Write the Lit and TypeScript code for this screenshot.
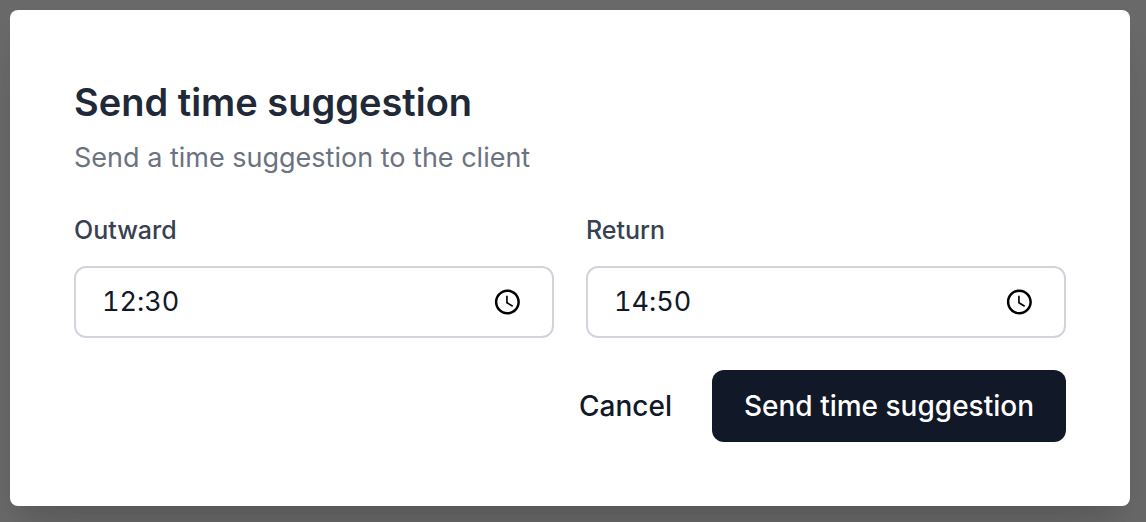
import { LitElement, html, css } from "lit";
import { customElement, property, state } from "lit/decorators.js";

@customElement("time-field")
class TimeField extends LitElement {
  static styles = css`
    :host {
      display: block;
      min-width: 0;
      font-family: Inter, "Liberation Sans", sans-serif;
    }
    .label {
      display: block;
      margin-bottom: 16px;
      font-size: 25px;
      line-height: 40px;
      font-weight: 500;
      color: #374151;
    }
    .box {
      display: flex;
      align-items: center;
      box-sizing: border-box;
      height: 72px;
      padding: 0 30px 0 26px;
      border: 2px solid #d1d5db;
      border-radius: 12px;
      background: #fff;
    }
    .input {
      flex: 1;
      min-width: 0;
      padding: 0;
      border: 0;
      outline: 0;
      background: transparent;
      font-family: inherit;
      font-size: 27px;
      line-height: 40px;
      font-variant-numeric: tabular-nums;
      font-variant-ligatures: no-contextual;
      color: #111827;
    }
    .picker {
      display: flex;
      padding: 0;
      border: 0;
      background: none;
      color: #000;
      cursor: pointer;
    }
    .icon {
      display: block;
      width: 30px;
      height: 30px;
    }
  `;

  @property() label = "";
  @property() value = "";

  private focusInput() {
    this.renderRoot.querySelector("input")?.focus();
  }

  private onInput(e: Event) {
    this.value = (e.target as HTMLInputElement).value;
  }

  render() {
    return html`
      <label class="label" for="time">${this.label}</label>
      <div class="box">
        <input
          class="input"
          id="time"
          type="text"
          inputmode="numeric"
          .value=${this.value}
          @input=${this.onInput}
        />
        <button class="picker" type="button" aria-label="Choose time" @click=${this.focusInput}>
          <svg class="icon" viewBox="0 0 24 24" fill="currentColor" aria-hidden="true">
            <path
              d="M12.3 2C6.8 2 2.3 6.48 2.3 12s4.5 10 10 10c5.52 0 10-4.48 10-10S17.82 2 12.3 2zM12.3 20c-4.42 0-8-3.58-8-8s3.58-8 8-8 8 3.58 8 8-3.58 8-8 8zM12.6 7H11.3v5.9l4.9 3 .7-1.1-4.3-2.6z"
            />
          </svg>
        </button>
      </div>
    `;
  }
}

@customElement("app-root")
class AppRoot extends LitElement {
  static styles = css`
    :host {
      display: block;
      box-sizing: border-box;
      min-height: 100vh;
      padding: 10px 16px 16px 10px;
      background: #696969;
      font-family: Inter, "Liberation Sans", sans-serif;
    }
    .dialog {
      padding: 64px;
      border-radius: 8px;
      background: #fff;
      box-shadow:
        0 40px 50px -10px rgba(0, 0, 0, 0.1),
        0 16px 20px -12px rgba(0, 0, 0, 0.1);
    }
    .title {
      margin: 0 0 8px;
      font-size: 38px;
      line-height: 56px;
      font-weight: 600;
      color: #1f2937;
    }
    .description {
      margin: 0 0 32px;
      font-size: 27px;
      line-height: 40px;
      color: #6b7280;
    }
    .fields {
      display: grid;
      grid-template-columns: 1fr 1fr;
      gap: 32px;
    }
    .actions {
      display: flex;
      justify-content: flex-end;
      gap: 8px;
      margin-top: 32px;
    }
    .button {
      height: 72px;
      padding: 0 32px;
      border: 0;
      border-radius: 12px;
      background: transparent;
      font-family: inherit;
      font-size: 28px;
      line-height: 40px;
      font-weight: 500;
      color: #111827;
      cursor: pointer;
    }
    .primary {
      background: #111827;
      color: #fff;
    }
  `;

  @state() private outward = "12:30";
  @state() private back = "14:50";

  render() {
    return html`
      <form
        class="dialog"
        role="dialog"
        aria-labelledby="title"
        aria-describedby="description"
        @submit=${(e: Event) => e.preventDefault()}
      >
        <h2 class="title" id="title">Send time suggestion</h2>
        <p class="description" id="description">Send a time suggestion to the client</p>
        <div class="fields">
          <time-field label="Outward" .value=${this.outward}></time-field>
          <time-field label="Return" .value=${this.back}></time-field>
        </div>
        <div class="actions">
          <button class="button" type="button">Cancel</button>
          <button class="button primary" type="submit">Send time suggestion</button>
        </div>
      </form>
    `;
  }
}
